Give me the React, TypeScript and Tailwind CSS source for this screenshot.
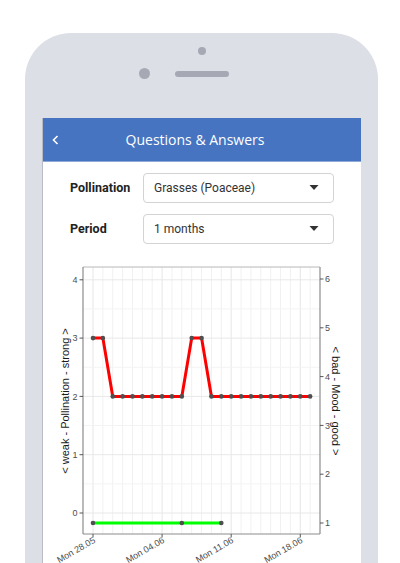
import React from "react";

const DX = 9.87;
const X0 = 93;
const yL = (v: number) => 513 - 58.3 * v;
const yR = (m: number) => 523 - 48.8 * (m - 1);
const red = [3, 3, 2, 2, 2, 2, 2, 2, 2, 2, 3, 3, 2, 2, 2, 2, 2, 2, 2, 2, 2, 2, 2];
const greenIdx = [0, 9, 13];
const dates = ["Mon 28.05", "Mon 04.06", "Mon 11.06", "Mon 18.06"];

function Chart() {
  const days = Array.from({ length: 23 }, (_, i) => i);
  const redPts = red.map((v, i) => [X0 + i * DX, yL(v)] as const);
  const greenPts = greenIdx.map((i) => [X0 + i * DX, yR(1)] as const);
  const tickFont = { fontFamily: '"Liberation Sans", Arial, sans-serif', fontSize: 9, fill: "#4d4d4d" };
  return (
    <svg width={318} height={313} viewBox="43 250 318 313" className="block">
      <rect x={83} y={267} width={237} height={267} fill="#ffffff" />
      {days.map((i) => (
        <line
          key={"v" + i}
          x1={X0 + i * DX}
          x2={X0 + i * DX}
          y1={267}
          y2={534}
          stroke={i % 7 === 0 ? "#e6e6e6" : "#f1f1f1"}
          strokeWidth={1}
        />
      ))}
      {[0.5, 1.5, 2.5, 3.5].map((v) => (
        <line key={"hm" + v} x1={83} x2={320} y1={yL(v)} y2={yL(v)} stroke="#f3f3f3" strokeWidth={1} />
      ))}
      {[0, 1, 2, 3, 4].map((v) => (
        <line key={"h" + v} x1={83} x2={320} y1={yL(v)} y2={yL(v)} stroke="#e8e8e8" strokeWidth={1} />
      ))}
      <line x1={83} x2={320} y1={267} y2={267} stroke="#b8b8b8" strokeWidth={1} />
      <line x1={83} x2={83} y1={267} y2={534} stroke="#8c8c8c" strokeWidth={1.2} />
      <line x1={320} x2={320} y1={267} y2={534} stroke="#8c8c8c" strokeWidth={1.2} />
      <line x1={83} x2={320} y1={534} y2={534} stroke="#8c8c8c" strokeWidth={1.2} />
      {[0, 1, 2, 3, 4].map((v) => (
        <g key={"lt" + v}>
          <line x1={79.5} x2={83} y1={yL(v)} y2={yL(v)} stroke="#555" strokeWidth={1} />
          <text x={77.5} y={yL(v) + 3.2} textAnchor="end" {...tickFont}>
            {v}
          </text>
        </g>
      ))}
      {[1, 2, 3, 4, 5, 6].map((m) => (
        <g key={"rt" + m}>
          <line x1={320} x2={323.5} y1={yR(m)} y2={yR(m)} stroke="#555" strokeWidth={1} />
          <text x={325} y={yR(m) + 3.2} textAnchor="start" {...tickFont}>
            {m}
          </text>
        </g>
      ))}
      {dates.map((d, k) => {
        const x = X0 + k * 7 * DX;
        return (
          <g key={d}>
            <line x1={x} x2={x} y1={534} y2={537.5} stroke="#555" strokeWidth={1} />
            <text
              x={x + 3}
              y={542}
              textAnchor="end"
              transform={`rotate(-30 ${x + 3} ${542})`}
              {...tickFont}
            >
              {d}
            </text>
          </g>
        );
      })}
      <text
        x={66}
        y={401}
        textAnchor="middle"
        dominantBaseline="middle"
        transform="rotate(-90 66 401)"
        style={{ fontFamily: '"Liberation Sans", Arial, sans-serif', fontSize: 11, fill: "#1a1a1a" }}
      >
        {"< weak - Pollination - strong >"}
      </text>
      <text
        x={335}
        y={401}
        textAnchor="middle"
        dominantBaseline="middle"
        transform="rotate(90 335 401)"
        style={{ fontFamily: '"Liberation Sans", Arial, sans-serif', fontSize: 11, fill: "#1a1a1a" }}
      >
        {"< bad - Mood - good >"}
      </text>
      <polyline
        points={redPts.map((p) => p.join(",")).join(" ")}
        fill="none"
        stroke="#ff0000"
        strokeWidth={3}
        strokeLinejoin="round"
      />
      <polyline
        points={greenPts.map((p) => p.join(",")).join(" ")}
        fill="none"
        stroke="#00ff00"
        strokeWidth={3}
      />
      {redPts.map((p, i) => (
        <circle key={"rp" + i} cx={p[0]} cy={p[1]} r={2.3} fill="#4f4f4f" />
      ))}
      {greenPts.map((p, i) => (
        <circle key={"gp" + i} cx={p[0]} cy={p[1]} r={2.3} fill="#4f4f4f" />
      ))}
    </svg>
  );
}

function Select({ value }: { value: string }) {
  return (
    <div className="flex h-[30px] flex-1 items-center justify-between rounded-[4px] border border-[#d3d3d3] bg-white pl-[10px] pr-[14px]">
      <span className="text-[12px] text-[#333333]" style={{ fontFamily: "Roboto, sans-serif" }}>
        {value}
      </span>
      <svg width="10" height="6" viewBox="0 0 10 6">
        <path d="M0.5 0 L9.5 0 L5 5 Z" fill="#333333" />
      </svg>
    </div>
  );
}

export default function App() {
  return (
    <div className="h-[563px] w-[400px] overflow-hidden bg-white pt-[33px]">
      <div className="ml-[25px] flex w-[353px] flex-col items-stretch rounded-t-[46px] bg-[#dcdfe6]">
        <div className="flex flex-col items-center pt-[14px]">
          <div className="h-[8px] w-[8px] rounded-full bg-[#a6a8b3]" />
          <div className="mt-[13px] flex items-center gap-[25px]">
            <div className="h-[11px] w-[11px] rounded-full bg-[#a6a8b3]" />
            <div className="h-[6px] w-[54px] rounded-full bg-[#a6a8b3]" />
            <div className="h-[11px] w-[11px]" />
          </div>
        </div>
        <div className="ml-[17px] mt-[39px] w-[319px] border-l border-[#b9bcc4] bg-white">
          <div className="flex h-[44px] items-center border-b border-[#8faad8] bg-[#4674c1] text-white">
            <div className="flex w-[30px] items-center pl-[9px]">
              <svg width="7" height="10" viewBox="0 0 7 10">
                <polyline points="5.5,1 1.5,5 5.5,9" fill="none" stroke="#ffffff" strokeWidth="1.6" />
              </svg>
            </div>
            <div
              className="flex-1 pr-[44px] text-center text-[14px]"
              style={{ fontFamily: '"Open Sans", sans-serif' }}
            >
              Questions &amp; Answers
            </div>
          </div>
          <div className="flex flex-col gap-[11px] pl-[27px] pr-[27px] pt-[11px]">
            <div className="flex items-center">
              <div
                className="w-[73px] text-[12.5px] font-bold text-[#222222]"
                style={{ fontFamily: "Roboto, sans-serif" }}
              >
                Pollination
              </div>
              <Select value="Grasses (Poaceae)" />
            </div>
            <div className="flex items-center">
              <div
                className="w-[73px] text-[12.5px] font-bold text-[#222222]"
                style={{ fontFamily: "Roboto, sans-serif" }}
              >
                Period
              </div>
              <Select value="1 months" />
            </div>
          </div>
          <div className="mt-[6px]">
            <Chart />
          </div>
        </div>
      </div>
    </div>
  );
}
